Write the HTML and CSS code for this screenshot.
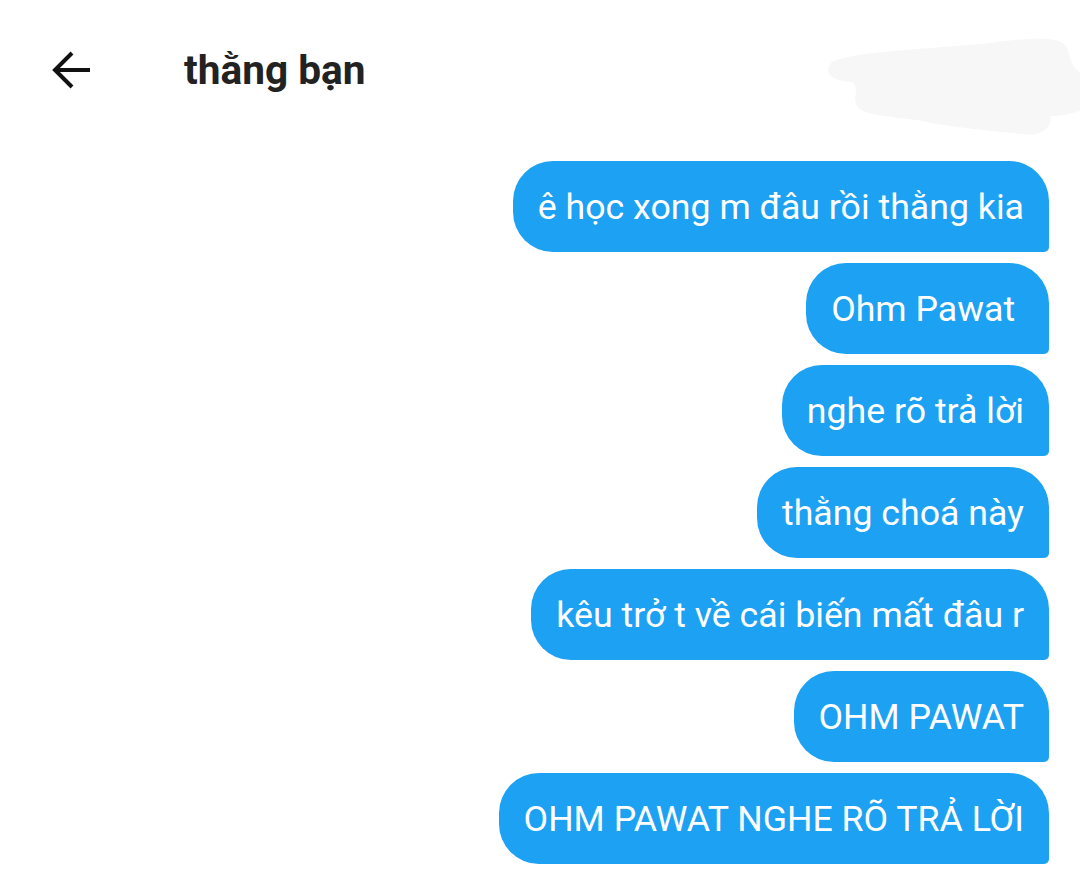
FILE: index.html
```html
<!DOCTYPE html>
<html lang="vi">
<head>
<meta charset="utf-8">
<link rel="stylesheet" href="styles.css">
</head>
<body>
<div class="screen">
  <header class="topbar">
    <button class="back" aria-label="Back">
      <svg width="44" height="44" viewBox="0 0 44 44"><path d="M40 22H6M22 5L5 22l17 17" fill="none" stroke="#111" stroke-width="4"/></svg>
    </button>
    <h1 class="title">thằng bạn</h1>
  </header>
  <svg class="smear" width="260" height="115" viewBox="0 0 260 115">
    <path d="M10 32 C 30 22, 90 20, 160 14 C 200 8, 235 6, 242 14 C 250 22, 245 30, 255 40 L 260 45 L 260 80 C 250 84, 240 86, 228 86 C 232 96, 218 108, 200 104 C 160 100, 120 96, 95 90 C 60 86, 40 84, 35 76 C 30 68, 38 56, 30 52 C 10 50, 0 44, 10 32 Z" fill="#f7f7f7"/>
  </svg>
  <main class="thread">
    <div class="bubble">ê học xong m đâu rồi thằng kia</div>
    <div class="bubble">Ohm Pawat </div>
    <div class="bubble">nghe rõ trả lời</div>
    <div class="bubble">thằng choá này</div>
    <div class="bubble">kêu trở t về cái biến mất đâu r</div>
    <div class="bubble">OHM PAWAT</div>
    <div class="bubble">OHM PAWAT NGHE RÕ TRẢ LỜI</div>
  </main>
</div>
</body>
</html>
```
FILE: styles.css
```css
* { box-sizing: border-box; }
html, body { margin: 0; padding: 0; background: #fff; }
body { font-family: Roboto, "Noto Sans", sans-serif; }
.screen { position: relative; width: 1080px; height: 871px; overflow: hidden; }
.topbar { display: flex; align-items: center; height: 140px; padding: 0 0 0 50px; }
.back { border: 0; background: none; padding: 0; width: 44px; height: 44px; display: flex; }
.title { margin: 0 0 0 90px; font-size: 40.6px; font-weight: 700; color: #222; }
.smear { position: absolute; left: 822px; top: 30px; }
.thread { display: flex; flex-direction: column; align-items: flex-end; gap: 11px; padding: 21px 31px 0 0; }
.bubble { background: #1da1f2; color: #fff; font-size: 35.7px; height: 91px; display: flex; align-items: center; padding: 0 25px; border-radius: 40px 40px 5px 40px; white-space: pre; }
```
